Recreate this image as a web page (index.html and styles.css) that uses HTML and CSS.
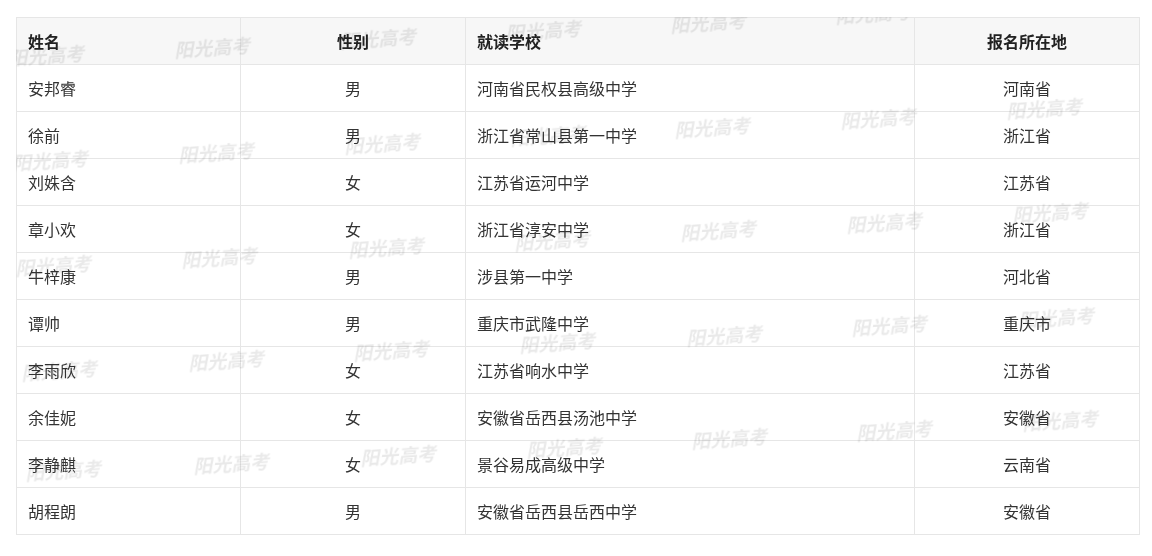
FILE: index.html
```html
<!DOCTYPE html>
<html lang="zh-CN">
<head>
<meta charset="utf-8">
<title>名单</title>
<link rel="stylesheet" href="styles.css">
</head>
<body>
<div class="page">
  <div class="table-wrap">
    <table class="roster">
      <colgroup>
        <col class="c-name"><col class="c-sex"><col class="c-school"><col class="c-prov">
      </colgroup>
      <thead>
        <tr><th class="left">姓名</th><th>性别</th><th class="left">就读学校</th><th>报名所在地</th></tr>
      </thead>
      <tbody>
        <tr><td class="left">安邦睿</td><td>男</td><td class="left">河南省民权县高级中学</td><td>河南省</td></tr>
        <tr><td class="left">徐前</td><td>男</td><td class="left">浙江省常山县第一中学</td><td>浙江省</td></tr>
        <tr><td class="left">刘姝含</td><td>女</td><td class="left">江苏省运河中学</td><td>江苏省</td></tr>
        <tr><td class="left">章小欢</td><td>女</td><td class="left">浙江省淳安中学</td><td>浙江省</td></tr>
        <tr><td class="left">牛梓康</td><td>男</td><td class="left">涉县第一中学</td><td>河北省</td></tr>
        <tr><td class="left">谭帅</td><td>男</td><td class="left">重庆市武隆中学</td><td>重庆市</td></tr>
        <tr><td class="left">李雨欣</td><td>女</td><td class="left">江苏省响水中学</td><td>江苏省</td></tr>
        <tr><td class="left">余佳妮</td><td>女</td><td class="left">安徽省岳西县汤池中学</td><td>安徽省</td></tr>
        <tr><td class="left">李静麒</td><td>女</td><td class="left">景谷易成高级中学</td><td>云南省</td></tr>
        <tr><td class="left">胡程朗</td><td>男</td><td class="left">安徽省岳西县岳西中学</td><td>安徽省</td></tr>
      </tbody>
    </table>
    <div class="wm-layer" aria-hidden="true">
      <span class="wm" style="left:-10px;top:27px">阳光高考</span>
      <span class="wm" style="left:156px;top:19px">阳光高考</span>
      <span class="wm" style="left:322px;top:10px">阳光高考</span>
      <span class="wm" style="left:487px;top:2px">阳光高考</span>
      <span class="wm" style="left:652px;top:-6px">阳光高考</span>
      <span class="wm" style="left:817px;top:-15px">阳光高考</span>

      <span class="wm" style="left:-6px;top:132px">阳光高考</span>
      <span class="wm" style="left:160px;top:124px">阳光高考</span>
      <span class="wm" style="left:326px;top:115px">阳光高考</span>
      <span class="wm" style="left:492px;top:107px">阳光高考</span>
      <span class="wm" style="left:656px;top:99px">阳光高考</span>
      <span class="wm" style="left:822px;top:90px">阳光高考</span>
      <span class="wm" style="left:988px;top:80px">阳光高考</span>

      <span class="wm" style="left:-3px;top:237px">阳光高考</span>
      <span class="wm" style="left:163px;top:229px">阳光高考</span>
      <span class="wm" style="left:330px;top:219px">阳光高考</span>
      <span class="wm" style="left:496px;top:212px">阳光高考</span>
      <span class="wm" style="left:662px;top:202px">阳光高考</span>
      <span class="wm" style="left:828px;top:194px">阳光高考</span>
      <span class="wm" style="left:994px;top:184px">阳光高考</span>

      <span class="wm" style="left:3px;top:342px">阳光高考</span>
      <span class="wm" style="left:170px;top:332px">阳光高考</span>
      <span class="wm" style="left:335px;top:322px">阳光高考</span>
      <span class="wm" style="left:501px;top:314px">阳光高考</span>
      <span class="wm" style="left:668px;top:307px">阳光高考</span>
      <span class="wm" style="left:833px;top:297px">阳光高考</span>
      <span class="wm" style="left:1000px;top:289px">阳光高考</span>

      <span class="wm" style="left:7px;top:442px">阳光高考</span>
      <span class="wm" style="left:175px;top:435px">阳光高考</span>
      <span class="wm" style="left:342px;top:427px">阳光高考</span>
      <span class="wm" style="left:508px;top:419px">阳光高考</span>
      <span class="wm" style="left:673px;top:410px">阳光高考</span>
      <span class="wm" style="left:838px;top:402px">阳光高考</span>
      <span class="wm" style="left:1004px;top:392px">阳光高考</span>
    </div>
  </div>
</div>
</body>
</html>
```

FILE: styles.css
```css
html, body {
  margin: 0;
  padding: 0;
  background: #ffffff;
}

body {
  font-family: "Noto Sans CJK SC", "Noto Sans", "Liberation Sans", sans-serif;
  color: #333333;
  font-size: 16px;
}

.page {
  padding: 17px 0 0 16px;
}

.table-wrap {
  position: relative;
  width: 1123px;
}

.roster {
  width: 1123px;
  border-collapse: collapse;
  table-layout: fixed;
}

.c-name { width: 224px; }
.c-sex { width: 225px; }
.c-school { width: 449px; }
.c-prov { width: 225px; }

.roster th,
.roster td {
  height: 46px;
  padding: 0 12px;
  border: 1px solid #e6e6e6;
  text-align: center;
  vertical-align: middle;
  line-height: 20px;
  white-space: nowrap;
}

.roster th.left,
.roster td.left {
  text-align: left;
  padding-left: 11px;
}

.roster thead th {
  background: #f7f7f7;
  font-weight: 700;
  color: #222222;
}

.roster td {
  font-weight: 400;
}

.wm-layer {
  position: absolute;
  inset: 0;
  overflow: hidden;
  pointer-events: none;
  mix-blend-mode: multiply;
}

.wm {
  position: absolute;
  width: 80px;
  text-align: center;
  font-family: "Noto Sans CJK SC", sans-serif;
  font-size: 19px;
  font-weight: 700;
  font-style: italic;
  line-height: 22px;
  white-space: nowrap;
  color: rgba(0, 0, 0, 0.085);
  transform: rotate(-4deg);
  filter: blur(0.7px);
}
```
